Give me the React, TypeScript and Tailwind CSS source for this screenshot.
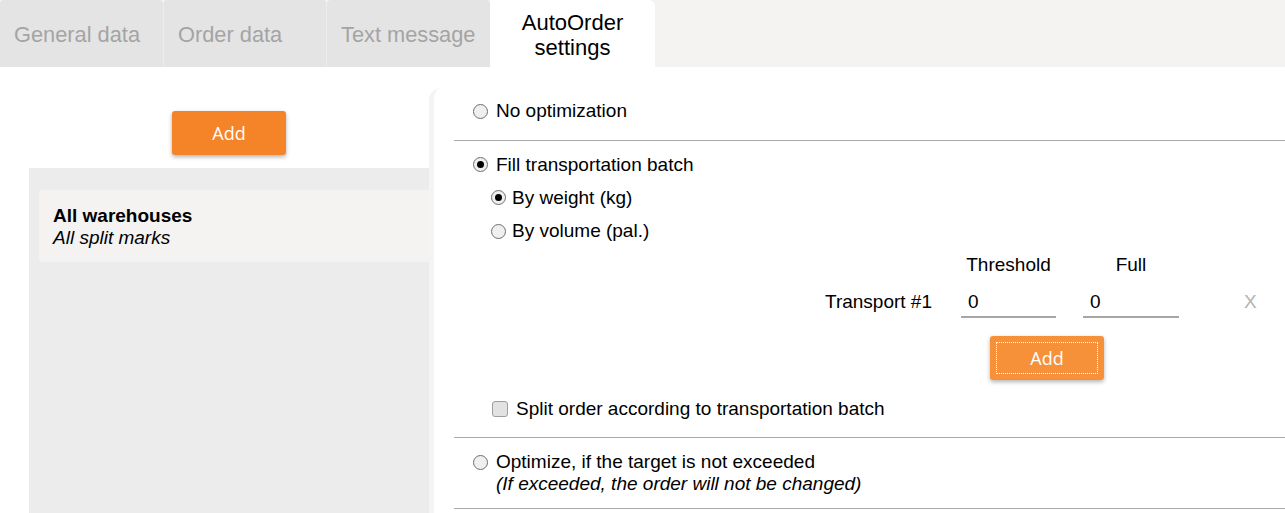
import React from "react";

const FONT = { fontFamily: '"Liberation Sans", Arial, sans-serif' };

function Radio({ checked }: { checked?: boolean }) {
  return (
    <span className="flex h-[15px] w-[15px] shrink-0 items-center justify-center rounded-full border border-[#6f6f6f] bg-[#efefef]">
      {checked && <span className="h-[7px] w-[7px] rounded-full bg-black" />}
    </span>
  );
}

function OrangeButton({ focused }: { focused?: boolean }) {
  return (
    <button
      className={
        "flex h-[44px] w-[114px] items-center justify-center rounded-[3px] text-[18px] text-white shadow-[0_2px_4px_rgba(0,0,0,0.3)] " +
        (focused
          ? "bg-[#f6913a] outline-1 outline-dotted outline-white outline-offset-[-7px]"
          : "bg-[#f58428]")
      }
      style={{ fontFamily: '"Open Sans", sans-serif' }}
    >
      Add
    </button>
  );
}

export default function App() {
  const tabs = ["General data", "Order data", "Text message"];

  return (
    <div className="h-[513px] w-full overflow-hidden bg-white text-black" style={FONT}>
      {/* Tab strip */}
      <div className="flex h-[67px] bg-[#f4f3f2]">
        {tabs.map((t, i) => (
          <div
            key={t}
            className={
              "flex h-full items-center rounded-t-[4px] bg-[#e4e4e4] pt-[3px] pl-[14px] text-[21.8px] text-[#a4a4a4] " +
              (i === 1 ? "w-[164px] border-x border-[#ececec]" : "w-[163px]")
            }
          >
            {t}
          </div>
        ))}
        <div className="flex h-full w-[165px] items-center justify-center rounded-tr-[6px] bg-white pt-[2px] text-center text-[22px] leading-[25px]">
          AutoOrder
          <br />
          settings
        </div>
      </div>

      <div className="flex h-[446px]">
        {/* Left column */}
        <div className="flex w-[429px] shrink-0 flex-col pl-[29px]">
          <div className="flex justify-center pt-[44px] pb-[13px]">
            <OrangeButton />
          </div>
          <div className="flex-1 bg-[#ececec] pt-[22px] pl-[10px]">
            <div className="rounded-l-[3px] bg-[#f4f3f2] px-[14px] pt-[15px] pb-[13px] text-[19px] leading-[22px]">
              <div className="font-bold">All warehouses</div>
              <div className="italic">All split marks</div>
            </div>
          </div>
        </div>

        {/* Right panel */}
        <div className="mt-[21px] flex-1 rounded-tl-[12px] border-l-[5px] border-[#f4f4f4] pl-[20px] text-[19px] leading-[22px]">
          {/* No optimization */}
          <div className="border-b border-[#a9a9a9] pt-[12px] pb-[18px] pl-[19px]">
            <label className="flex items-center gap-[8px]">
              <Radio />
              No optimization
            </label>
          </div>

          {/* Fill transportation batch */}
          <div className="border-b border-[#a9a9a9] pt-[7px] pb-[16px] pl-[19px]">
            <label className="flex h-[33px] items-center gap-[8px]">
              <Radio checked />
              Fill transportation batch
            </label>
            <label className="flex h-[33px] items-center gap-[6px] pl-[18px]">
              <Radio checked />
              By weight (kg)
            </label>
            <label className="flex h-[34px] items-center gap-[6px] pl-[18px]">
              <Radio />
              By volume (pal.)
            </label>

            <div className="flex h-[33px] items-center">
              <div className="w-[459px]" />
              <div className="ml-[29px] w-[95px] text-center">Threshold</div>
              <div className="ml-[27px] w-[96px] text-center">Full</div>
            </div>

            <div className="mt-[3px] flex h-[36px] items-start">
              <div className="w-[459px] pt-[7px] text-right">Transport #1</div>
              <div className="ml-[29px] flex h-[34px] w-[95px] items-center border-b-2 border-[#a6a6a6] pt-[4px] pl-[7px]">0</div>
              <div className="ml-[27px] flex h-[34px] w-[96px] items-center border-b-2 border-[#a6a6a6] pt-[4px] pl-[7px]">0</div>
              <div className="ml-[65px] pt-[7px] text-[#b3b3b3]">X</div>
            </div>

            <div className="mt-[16px] ml-[517px]">
              <OrangeButton focused />
            </div>

            <label className="mt-[17px] flex h-[24px] items-center gap-[8px] pl-[19px]">
              <span className="h-[16px] w-[16px] shrink-0 rounded-[3px] border border-[#9e9e9e] bg-[#e2e2e2]" />
              Split order according to transportation batch
            </label>
          </div>

          {/* Optimize */}
          <div className="border-b border-[#a9a9a9] pt-[13px] pb-[13px] pl-[19px]">
            <label className="flex items-center gap-[8px]">
              <Radio />
              Optimize, if the target is not exceeded
            </label>
            <div className="pl-[23px] italic">(If exceeded, the order will not be changed)</div>
          </div>
        </div>
      </div>
    </div>
  );
}
